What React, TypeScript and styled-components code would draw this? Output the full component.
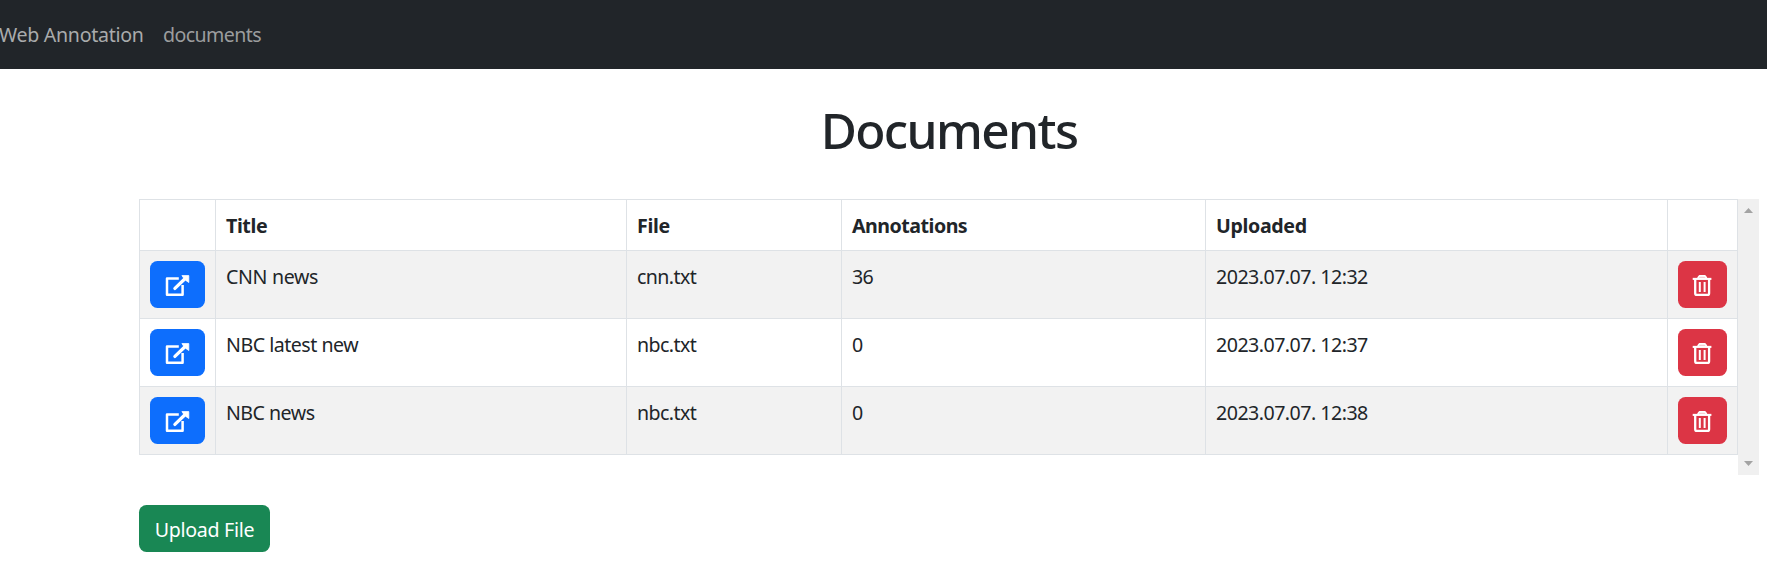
import React from "react";
import styled, { createGlobalStyle } from "styled-components";

const GlobalStyle = createGlobalStyle`
  *, *::before, *::after { box-sizing: border-box; }
  html, body { margin: 0; background: #fff; overflow: hidden; }
  body {
    font-family: "Noto Sans", "Open Sans", sans-serif;
    font-size: 19.6px;
    line-height: 32px;
    color: #212529;
  }
`;

const Navbar = styled.nav`
  display: flex;
  align-items: center;
  gap: 19.5px;
  height: 69px;
  padding-top: 1px;
  background: #212529;
  overflow: hidden;
`;

const NavLink = styled.a<{ $track: number; $dim?: boolean }>`
  color: ${(p) => (p.$dim ? "#9b9d9e" : "#a9abac")};
  letter-spacing: ${(p) => p.$track}px;
  text-decoration: none;
  white-space: nowrap;
  &:first-child { margin-left: -1px; }
`;

const Content = styled.main`
  width: 1620px;
  margin-left: 139px;
  padding-top: 31px;
`;

const Heading = styled.h1`
  margin: 0 0 39px;
  font-size: 49.5px;
  font-weight: 500;
  line-height: 60px;
  letter-spacing: -1.6px;
  text-align: center;
`;

const TableViewport = styled.div`
  display: flex;
  height: 276px;
  margin-bottom: 30px;
`;

const Table = styled.table`
  width: 1599px;
  height: 256px;
  table-layout: fixed;
  border-collapse: separate;
  border-spacing: 0;
  border-bottom: 1px solid #dee2e6;
  align-self: flex-start;
`;

const Col = styled.col<{ $width: number }>`
  width: ${(p) => p.$width}px;
`;

const Row = styled.tr`
  height: 68px;
  tbody > &:nth-child(odd) { background: #f2f2f2; }
`;

const HeadRow = styled.tr`
  height: 51px;
`;

const Cell = styled.td<{ $track?: number }>`
  padding: 10px 10px 8px;
  border: solid #dee2e6;
  border-width: 1px 0 0 1px;
  vertical-align: top;
  text-align: left;
  white-space: nowrap;
  letter-spacing: ${(p) => p.$track ?? 0}px;
  &:last-child { border-right-width: 1px; }
`;

const HeadCell = styled(Cell).attrs({ as: "th" })`
  font-weight: 700;
`;

const Button = styled.button<{ $color: string; $width: number }>`
  display: flex;
  align-items: center;
  justify-content: center;
  width: ${(p) => p.$width}px;
  height: 47px;
  padding: 0;
  border: 0;
  border-radius: 7.5px;
  background: ${(p) => p.$color};
  color: #fff;
  font: inherit;
  letter-spacing: -0.28px;
`;

const UploadButton = styled(Button)`
  padding-top: 2px;
`;

const Scrollbar = styled.div`
  display: flex;
  flex-direction: column;
  justify-content: space-between;
  align-items: center;
  width: 21px;
  padding: 9px 0;
  background: #f0f0f0;
`;

const OpenIcon = () => (
  <svg width="25" height="25" viewBox="0 0 25 25" fill="none" stroke="#fff">
    <path d="M13.8 6.6H2V22.8H17.6V13" strokeWidth="2.5" strokeLinejoin="round" />
    <path d="M9.9 16.4L21 5.8" strokeWidth="3.3" strokeLinecap="round" />
    <path d="M16.9 3.6H23.8V10.5L20.8 8.4L19 6.6Z" fill="#fff" strokeWidth="0.8" strokeLinejoin="round" />
  </svg>
);

const TrashIcon = () => (
  <svg width="21" height="25" viewBox="0 0 21 25" fill="none" stroke="#fff">
    <path d="M5.8 6V5.3L7.6 3.2H12.8L14.8 5.3V6Z" fill="#f6c5ca" stroke="none" />
    <path d="M5.8 6L7.6 3.8H12.8L14.6 6" strokeWidth="1.7" strokeLinejoin="round" />
    <path d="M0.7 6.9H19.4" strokeWidth="2.1" />
    <path d="M3.2 7V21.2Q3.2 22.9 4.9 22.9H15.4Q17.1 22.9 17.1 21.2V7" strokeWidth="2.3" />
    <path d="M7.8 10V20M12.6 10V20" strokeWidth="2" />
  </svg>
);

const ScrollArrow = ({ down = false }: { down?: boolean }) => (
  <svg width="9" height="5" viewBox="0 0 9 5">
    <path d={down ? "M0 0H9L4.5 5Z" : "M0 5H9L4.5 0Z"} fill="#a3a3a3" />
  </svg>
);

type Text = { text: string; track: number };

const columns = [76, 411, 215, 364, 462, 71];

const headers: Text[] = [
  { text: "", track: 0 },
  { text: "Title", track: -0.4 },
  { text: "File", track: -0.35 },
  { text: "Annotations", track: -0.5 },
  { text: "Uploaded", track: -0.35 },
  { text: "", track: 0 },
];

const documents: Text[][] = [
  [
    { text: "CNN news", track: -0.33 },
    { text: "cnn.txt", track: -0.6 },
    { text: "36", track: -0.6 },
    { text: "2023.07.07. 12:32", track: -0.52 },
  ],
  [
    { text: "NBC latest new", track: -0.49 },
    { text: "nbc.txt", track: -0.6 },
    { text: "0", track: 0 },
    { text: "2023.07.07. 12:37", track: -0.52 },
  ],
  [
    { text: "NBC news", track: -0.52 },
    { text: "nbc.txt", track: -0.6 },
    { text: "0", track: 0 },
    { text: "2023.07.07. 12:38", track: -0.52 },
  ],
];

export default function App() {
  return (
    <>
      <GlobalStyle />
      <Navbar>
        <NavLink $track={-0.3}>Web Annotation</NavLink>
        <NavLink $track={-0.6} $dim>documents</NavLink>
      </Navbar>
      <Content>
        <Heading>Documents</Heading>
        <TableViewport>
          <Table>
            <colgroup>
              {columns.map((width, i) => <Col key={i} $width={width} />)}
            </colgroup>
            <thead>
              <HeadRow>
                {headers.map((h, i) => <HeadCell key={i} $track={h.track}>{h.text}</HeadCell>)}
              </HeadRow>
            </thead>
            <tbody>
              {documents.map((doc, i) => (
                <Row key={i}>
                  <Cell>
                    <Button $color="#0d6efd" $width={55} aria-label="Open"><OpenIcon /></Button>
                  </Cell>
                  {doc.map((c, j) => <Cell key={j} $track={c.track}>{c.text}</Cell>)}
                  <Cell>
                    <Button $color="#dc3545" $width={49} aria-label="Delete"><TrashIcon /></Button>
                  </Cell>
                </Row>
              ))}
            </tbody>
          </Table>
          <Scrollbar>
            <ScrollArrow />
            <ScrollArrow down />
          </Scrollbar>
        </TableViewport>
        <UploadButton $color="#198754" $width={131}>Upload File</UploadButton>
      </Content>
    </>
  );
}
